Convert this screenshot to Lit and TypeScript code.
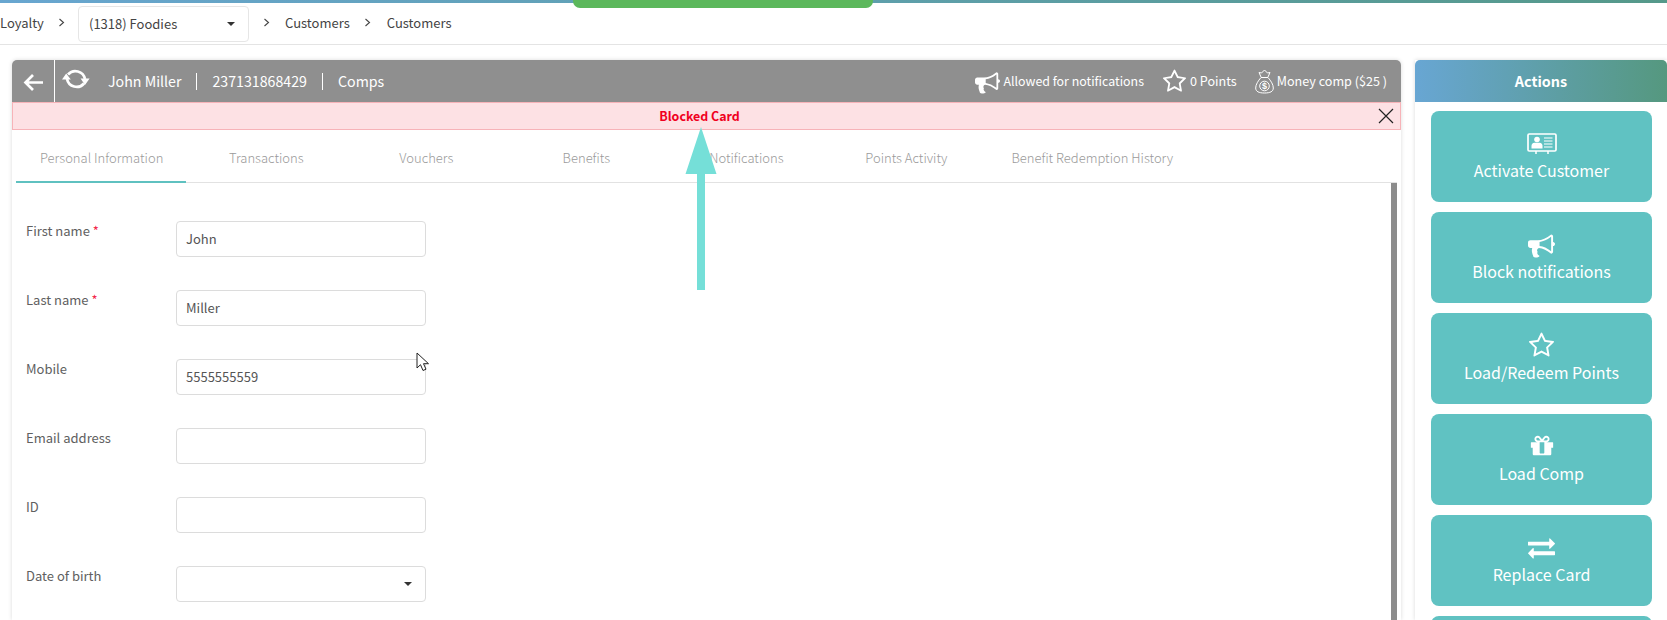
import { LitElement, html, css, svg } from "lit";
import { customElement } from "lit/decorators.js";

const FA = {
  bullhorn: "M1664 736q53 0 90.5 37.5t37.5 90.5-37.5 90.5-90.5 37.5v384q0 52-38 90t-90 38q-417-347-812-380-58 19-91 66t-31 100.5 40 92.5q-20 33-23 65.5t6 58 33.5 55 48 50 61.5 50.5q-29 58-111.5 83t-168.5 11.5-132-55.5q-7-23-29.5-87.5t-32-94.5-23-89-15-101 3.5-98.5 22-110.5h-122q-66 0-113-47t-47-113v-192q0-66 47-113t113-47h480q435 0 896-384 52 0 90 38t38 90v384zm-128 604v-954q-394 302-768 343v270q377 42 768 341z",
  star: "M1201 1004l306-297-422-62-189-382-189 382-422 62 306 297-73 421 378-199 377 199zm527-357q0 22-26 48l-363 354 86 500q1 7 1 20 0 50-41 50-19 0-40-12l-449-236-449 236q-22 12-40 12-21 0-31.5-14.5t-10.5-35.5q0-6 2-20l86-500-364-354q-25-27-25-48 0-37 56-46l502-73 225-455q19-41 49-41t49 41l225 455 502 73q56 9 56 46z",
  gift: "M1056 1356v-716h-320v716q0 25 18 38.5t46 13.5h192q28 0 46-13.5t18-38.5zm-456-844h195l-126-161q-26-31-69-31-40 0-68 28t-28 68 28 68 68 28zm688-96q0-40-28-68t-68-28q-43 0-69 31l-125 161h194q40 0 68-28t28-68zm376 256v320q0 14-9 23t-23 9h-96v416q0 40-28 68t-68 28h-1088q-40 0-68-28t-28-68v-416h-96q-14 0-23-9t-9-23v-320q0-14 9-23t23-9h440q-93 0-158.5-65.5t-65.5-158.5 65.5-158.5 158.5-65.5q107 0 168 77l128 165 128-165q61-77 168-77 93 0 158.5 65.5t65.5 158.5-65.5 158.5-158.5 65.5h440q14 0 23 9t9 23z",
  exchange: "M1792 1184v192q0 13-9.5 22.5t-22.5 9.5h-1376v192q0 13-9.5 22.5t-22.5 9.5q-12 0-24-10l-319-320q-9-9-9-22 0-14 9-23l320-320q9-9 23-9 13 0 22.5 9.5t9.5 22.5v192h1376q13 0 22.5 9.5t9.5 22.5zm0-544q0 14-9 23l-320 320q-9 9-23 9-13 0-22.5-9.5t-9.5-22.5v-192h-1376q-13 0-22.5-9.5t-9.5-22.5v-192q0-13 9.5-22.5t22.5-9.5h1376v-192q0-14 9-23t23-9q12 0 24 10l319 319q9 9 9 23z",
};

const fa = (d: string, size: number) => html`<svg width=${size} height=${size} viewBox="0 0 1792 1792" fill="#fff">${svg`<path d=${d}></path>`}</svg>`;

const idCard = html`<svg width="30" height="21" viewBox="0 0 30 21" fill="none">
  <rect x="1" y="1" width="28" height="17" rx="1.2" stroke="#fff" stroke-width="1.7"></rect>
  <circle cx="10" cy="6.500" r="2.800" fill="#fff"></circle>
  <path d="M4.500 15.500v-2.500q0-3 3-3.300h5q3 .3 3 3.300v2.500z" fill="#fff"></path>
  <path d="M17 5h8.500M17 8h8.500M17 11h8.500M17 14h8.500" stroke="#fff" stroke-width="1.200"></path>
  <path d="M9 18v3M21 18v3" stroke="#fff" stroke-width="1.500"></path>
</svg>`;

const refresh = html`<svg width="28" height="24" viewBox="0 0 28 24" fill="none" stroke="#fff" stroke-width="2.700">
  <path d="M6 7.500A9.800 9.800 0 0 1 23 12"></path>
  <path d="M22 16.500A9.800 9.800 0 0 1 5 12"></path>
  <path d="M0 12.500L4.200 6.500 8.800 12.500zM18.600 11.500h9L23 18z" fill="#fff" stroke="none"></path>
</svg>`;

const moneyBag = html`<svg width="19" height="25" viewBox="0 0 19 25" fill="none" stroke="#fff" stroke-width="1">
  <path d="M6 8L4 3.500l2.500.5L9.500 1l3 3 2.500-.5L13 8"></path>
  <path d="M6 8.500h7M6 8.500C3 12 .7 15.500 .7 19c0 3.500 3 5 8.800 5s8.800-1.500 8.800-5c0-3.500-2.300-7-5.300-10.500"></path>
  <circle cx="9.500" cy="17" r="4.800"></circle>
  <text x="9.500" y="20.300" font-size="9" font-weight="700" text-anchor="middle" fill="#fff" stroke="none" font-family="Liberation Sans, sans-serif">$</text>
</svg>`;

const caret = html`<span class="caret"></span>`;
const chev = html`<svg class="chev" width="7" height="9" viewBox="0 0 7 9" fill="none" stroke="#444" stroke-width="1.100"><path d="M1.500 1l4 3.500-4 3.500"></path></svg>`;

const TABS = ["Personal Information", "Transactions", "Vouchers", "Benefits", "Notifications", "Points Activity", "Benefit Redemption History"];

const FIELDS: { label: string; req?: boolean; value?: string; select?: boolean }[] = [
  { label: "First name", req: true, value: "John" },
  { label: "Last name", req: true, value: "Miller" },
  { label: "Mobile", value: "5555555559" },
  { label: "Email address" },
  { label: "ID" },
  { label: "Date of birth", select: true },
];

const ACTIONS = [
  { label: "Activate Customer", icon: idCard },
  { label: "Block notifications", icon: fa(FA.bullhorn, 27) },
  { label: "Load/Redeem Points", icon: fa(FA.star, 27) },
  { label: "Load Comp", icon: fa(FA.gift, 26) },
  { label: "Replace Card", icon: fa(FA.exchange, 27) },
  { label: "", icon: html`` },
];

@customElement("app-root")
export class AppRoot extends LitElement {
  static styles = css`
    :host {
      display: block; position: relative; width: 1667px; height: 620px; overflow: hidden; background: #fff;
      font-family: "Noto Sans CJK SC", "Noto Sans", sans-serif; font-size: 13px; line-height: 20px; color: #555;
    }
    .topbar { height: 3px; background: linear-gradient(90deg, #68a6d0, #55998a); }
    .pill { position: absolute; left: 573px; top: 0; width: 300px; height: 8px; background: #5cb85c; border-radius: 0 0 7px 7px; }
    .crumbs { height: 41px; border-bottom: 1px solid #e4e4e4; display: flex; align-items: center; color: #444; }
    .loy { width: 44px; margin-right: 14px; margin-top: -2px; }
    .chev { flex: none; margin-top: -2px; }
    .shop { width: 171px; height: 36px; box-sizing: border-box; margin: 0 14px 0 13px; border: 1px solid #e6e6e6; border-radius: 4px; display: flex; align-items: center; justify-content: space-between; padding: 0 10px; color: #444; }
    .shop .caret { margin-right: 3px; }
    .caret { display: block; width: 0; height: 0; border: 4px solid transparent; border-top-color: #333; border-bottom: 0; }
    .c1 { margin: -2px 14px 0 15px; }
    .c2 { margin: -2px 0 0 16px; }
    .main { display: flex; padding: 15px 0 0 12px; gap: 14px; align-items: flex-start; }
    .card { width: 1389px; height: 560px; box-shadow: 0 0 4px rgba(0,0,0,.15); border-radius: 5px 5px 0 0; }
    .head { height: 42px; background: #8f8f8f; border-radius: 5px 5px 0 0; display: flex; align-items: center; color: #fff; font-size: 14.2px; }
    .back { width: 43px; height: 42px; box-sizing: border-box; border-right: 1px solid #fff; display: flex; align-items: center; justify-content: center; flex: none; padding: 3px 0 0 0; }
    .refresh { margin: -4px 0 0 7px; flex: none; display: flex; }
    .who { margin-left: 18px; }
    .sep { width: 1px; height: 17px; background: #fff; margin: 0 15px; }
    .stats { margin-left: auto; display: flex; align-items: center; font-size: 12.6px; padding-right: 14px; }
    .stats svg { flex: none; }
    .stat { display: flex; align-items: center; gap: 3px; }
    .stat.narrow { font-size: 12.4px; }
    .stat + .stat { margin-left: 18px; }
    .alert { height: 28px; box-sizing: border-box; background: #fde1e4; border: 1px solid #f7b3b8; display: flex; align-items: center; justify-content: center; color: #f00020; font-weight: 700; font-size: 12.4px; padding: 0 14px 0 0; position: relative; }
    .close { position: absolute; right: 6px; top: 5px; display: block; }
    .tabs { margin: 0 4px 0 4px; height: 53px; box-sizing: border-box; border-bottom: 1px solid #e2e2e2; display: flex; color: #9a9a9a; font-size: 13px; font-weight: 300; }
    .tab { min-width: 160px; box-sizing: border-box; padding: 3px 25px 0; display: flex; align-items: center; justify-content: center; white-space: nowrap; }
    .tab.on { border-bottom: 2px solid #5fc1c0; height: 53px; padding: 5px 23px 0 24px; }
    .body { margin-right: 4px; display: flex; }
    .form { flex: 1; padding: 38px 0 0 14px; display: flex; flex-direction: column; gap: 33px; }
    .bar { width: 6px; height: 440px; background: #8c8c8c; flex: none; }
    .row { display: flex; align-items: flex-start; height: 36px; }
    .lbl { width: 150px; line-height: 20px; flex: none; color: #606060; }
    .req { color: #f2294b; font-size: 13px; margin-left: 3px; }
    .input { width: 250px; height: 36px; box-sizing: border-box; border: 1px solid #dcdcdc; border-radius: 4px; padding: 0 9px; display: flex; align-items: center; justify-content: space-between; color: #555; }
    .input .caret { margin-right: 4px; }
    .panel { width: 252px; flex: none; box-shadow: 0 0 4px rgba(0,0,0,.15); height: 560px; }
    .phead { height: 42px; box-sizing: border-box; padding-bottom: 1px; background: linear-gradient(90deg, #68a6d3, #55987f); border-radius: 5px 5px 0 0; color: #fff; font-weight: 700; font-size: 14.4px; display: flex; align-items: center; justify-content: center; }
    .list { padding: 9px 15px 0 16px; display: flex; flex-direction: column; gap: 10px; }
    .btn { height: 91px; background: #60c2c2; border-radius: 8px; color: #fff; font-size: 16px; display: flex; flex-direction: column; align-items: center; justify-content: flex-start; padding-top: 18px; box-sizing: border-box; flex: none; }
    .ic { height: 28px; display: flex; align-items: center; justify-content: center; }
    .btn .t { line-height: 24px; margin-top: 1px; white-space: nowrap; }
    .arrow { position: absolute; left: 685px; top: 127px; }
    .cursor { position: absolute; left: 416px; top: 352px; }
  `;

  render() {
    return html`
      <div class="topbar"></div>
      <div class="pill"></div>
      <div class="crumbs">
        <span class="loy">Loyalty</span>${chev}
        <div class="shop"><span>(1318) Foodies</span>${caret}</div>
        ${chev}<span class="c1">Customers</span>${chev}<span class="c2">Customers</span>
      </div>
      <div class="main">
        <div class="card">
          <div class="head">
            <div class="back"><svg width="20" height="17" viewBox="0 0 20 17" fill="none" stroke="#fff" stroke-width="2.700"><path d="M20 8.500H3M10 1L2.500 8.500 10 16"></path></svg></div>
            <span class="refresh">${refresh}</span>
            <span class="who">John Miller</span><span class="sep"></span><span>237131868429</span><span class="sep"></span><span>Comps</span>
            <div class="stats">
              <span class="stat narrow">${fa(FA.bullhorn, 25)}Allowed for notifications</span>
              <span class="stat">${fa(FA.star, 25)}0 Points</span>
              <span class="stat">${moneyBag}Money comp&nbsp;($25 )</span>
            </div>
          </div>
          <div class="alert">Blocked Card
            <svg class="close" width="16" height="16" viewBox="0 0 16 16" stroke="#222" stroke-width="1.200"><path d="M1 1l14 14M15 1L1 15"></path></svg>
          </div>
          <div class="tabs">${TABS.map((t, i) => html`<div class="tab ${i === 0 ? "on" : ""}">${t}</div>`)}</div>
          <div class="body">
            <div class="form">
              ${FIELDS.map((f) => html`<div class="row">
                <div class="lbl">${f.label}${f.req ? html`<span class="req">*</span>` : ""}</div>
                <div class="input"><span>${f.value ?? ""}</span>${f.select ? caret : ""}</div>
              </div>`)}
            </div>
            <div class="bar"></div>
          </div>
        </div>
        <div class="panel">
          <div class="phead">Actions</div>
          <div class="list">
            ${ACTIONS.map((a) => html`<div class="btn"><div class="ic">${a.icon}</div><div class="t">${a.label}</div></div>`)}
          </div>
        </div>
      </div>
      <svg class="arrow" width="32" height="163" viewBox="0 0 32 163"><path d="M16 0L31.500 47H20v116h-8V47H.5z" fill="#75dfd8"></path></svg>
      <svg class="cursor" width="14" height="20" viewBox="0 0 14 20"><path d="M1 1v15l3.500-3.300 2.500 5.800 3-1.300-2.500-5.500H12.500z" fill="#fff" stroke="#222" stroke-width="1"></path></svg>
    `;
  }
}
